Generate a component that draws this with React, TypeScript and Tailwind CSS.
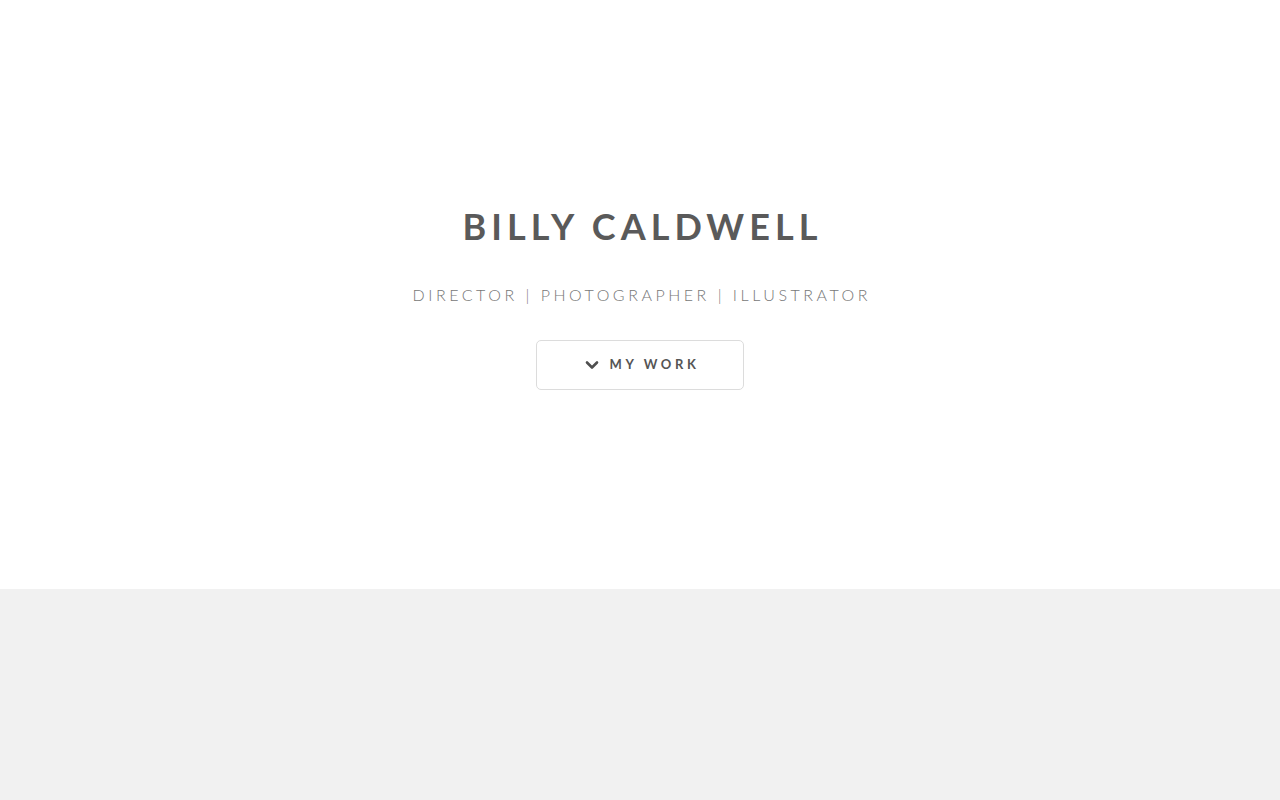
import React from 'react';

const App: React.FC = () => {
  return (
    <div className="min-h-[800px] bg-[#f1f1f1] font-['Lato','Liberation_Sans',sans-serif]">
      {/* Hero */}
      <section className="h-[589px] bg-white flex flex-col items-center pt-[206px]">
        <h1 className="text-[36px] leading-[40px] font-bold tracking-[0.14em] text-[#5a5a5a] pl-[0.14em]">
          BILLY CALDWELL
        </h1>
        <p className="mt-[39px] text-[16px] leading-[20px] font-light tracking-[0.22em] text-[#777] pl-[0.22em]">
          DIRECTOR | PHOTOGRAPHER | ILLUSTRATOR
        </p>
        <button className="mt-[35px] w-[208px] h-[50px] border border-[#dcdcdc] rounded-[5px] bg-white flex items-center justify-center gap-[11px] pl-[4px]">
          <svg width="14" height="10" viewBox="0 0 14 10" fill="none">
            <path d="M2 2.5 L7 7.5 L12 2.5" stroke="#4f4f4f" strokeWidth="2.6" strokeLinecap="round" strokeLinejoin="round" />
          </svg>
          <span className="text-[13px] font-bold tracking-[0.28em] text-[#555]">MY WORK</span>
        </button>
      </section>
    </div>
  );
};

export default App;
